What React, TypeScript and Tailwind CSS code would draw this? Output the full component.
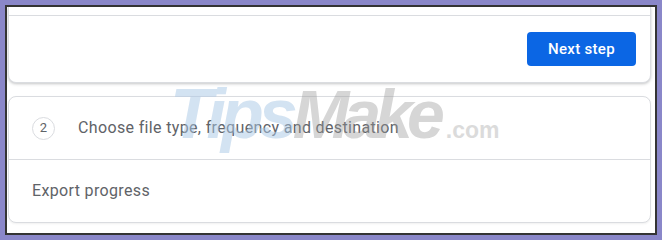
import React from 'react'

const font = { fontFamily: 'Roboto, "Liberation Sans", Arial, sans-serif' }

function StepCircle({ n }: { n: number }) {
  return (
    <div className="w-[23px] h-[23px] rounded-full border border-[#dadce0] flex items-center justify-center text-[13px] text-[#5f6368] shrink-0">
      {n}
    </div>
  )
}

export default function App() {
  return (
    <div className="relative w-[662px] h-[240px] bg-[#8a87c9] p-[5px]" style={font}>
      <div className="h-full border-2 border-[#343434] bg-white pl-[1px] pr-[4px] flex flex-col overflow-hidden">
        {/* top card (scrolled, top cut off) */}
        <div className="bg-white border border-t-0 border-[#dadce0] rounded-b-lg shadow-[0_1px_3px_rgba(60,64,67,0.3)]">
          <div className="h-[8px]" />
          <div className="border-t border-[#dadce0] flex justify-end py-4 pr-[14px]">
            <button className="w-[109px] h-[34px] rounded bg-[#0b66e4] text-white text-[15px] font-medium tracking-[0.3px]">
              Next step
            </button>
          </div>
        </div>

        {/* step 2 card */}
        <div className="mt-[13px] bg-white border border-[#dadce0] rounded-lg shadow-[0_1px_2px_rgba(60,64,67,0.08)]">
          <div className="h-[62px] flex items-center pl-[23px] gap-[23px]">
            <StepCircle n={2} />
            <span className="text-[16px] tracking-[0.35px] text-[#5f6368]">
              Choose file type, frequency and destination
            </span>
          </div>
          <div className="h-[63px] border-t border-[#dadce0] flex items-center pl-[23px]">
            <span className="text-[16px] tracking-[0.35px] text-[#5f6368]">Export progress</span>
          </div>
        </div>
      </div>

      {/* watermark */}
      <div
        className="absolute left-[170px] top-[79px] pointer-events-none flex items-baseline italic font-black leading-none select-none"
        style={{ fontFamily: '"Liberation Sans", Arial, sans-serif' }}
      >
        <span className="text-[70px] tracking-[-5px] text-[#a9c8e6] opacity-50">Tips</span>
        <span className="text-[68px] tracking-[-6px] text-[#9a9a9a] opacity-40">Make</span>
        <span className="text-[23px] ml-[7px] text-[#9a9a9a] opacity-35 not-italic font-bold">.com</span>
      </div>
    </div>
  )
}
